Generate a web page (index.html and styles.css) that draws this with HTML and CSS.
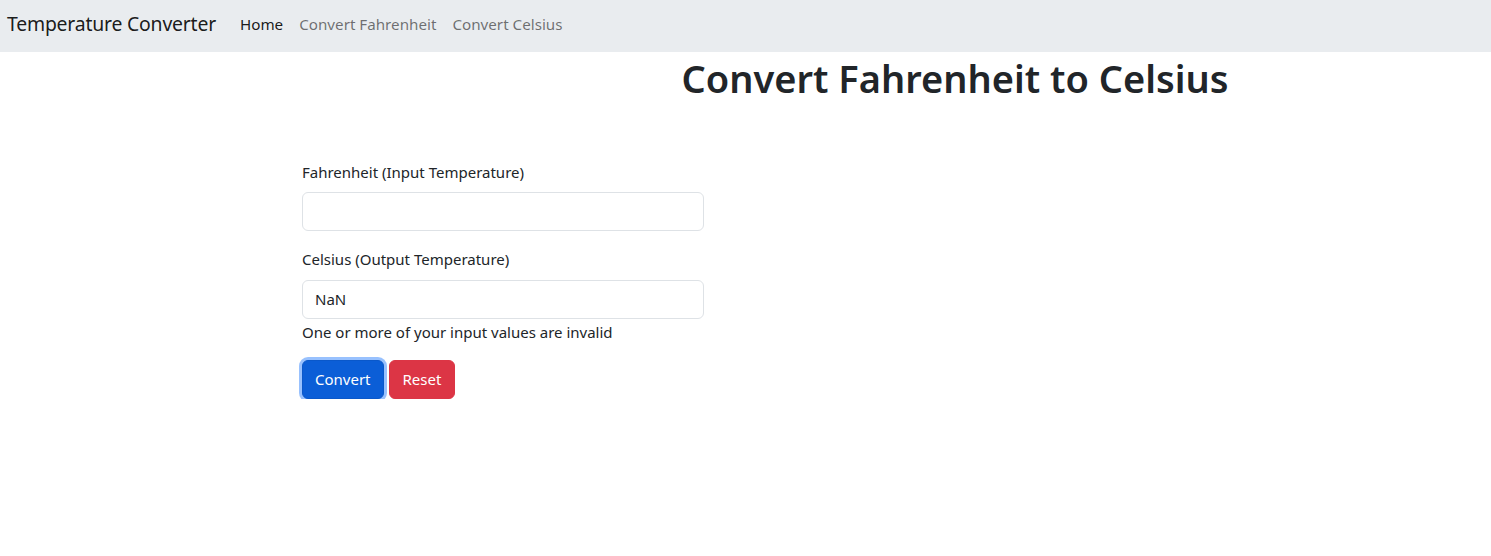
FILE: index.html
```html
<!DOCTYPE html>
<html lang="en">
<head>
<meta charset="utf-8">
<title>Temperature Converter</title>
<link rel="stylesheet" href="styles.css">
</head>
<body>
<nav class="navbar">
  <span class="brand">Temperature Converter</span>
  <ul class="nav">
    <li><a class="nav-link active" href="#">Home</a></li>
    <li><a class="nav-link" href="#">Convert Fahrenheit</a></li>
    <li><a class="nav-link" href="#">Convert Celsius</a></li>
  </ul>
</nav>
<main class="main">
  <h1 class="title">Convert Fahrenheit to Celsius</h1>
  <form class="form">
    <div class="field">
      <label class="label" for="f">Fahrenheit (Input Temperature)</label>
      <input class="input" id="f" type="text">
    </div>
    <div class="field">
      <label class="label" for="c">Celsius (Output Temperature)</label>
      <input class="input" id="c" type="text" value="NaN">
      <div class="message">One or more of your input values are invalid</div>
    </div>
    <div class="buttons">
      <button type="button" class="btn btn-primary">Convert</button>
      <button type="button" class="btn btn-danger">Reset</button>
    </div>
  </form>
</main>
</body>
</html>
```
FILE: styles.css
```css
* { box-sizing: border-box; }
body {
  margin: 0;
  font-family: "Noto Sans", "Open Sans", sans-serif;
  font-size: 16px;
  line-height: 1.5;
  color: #212529;
  background: #fff;
}
.navbar {
  height: 52px;
  background: #e9ecef;
  display: flex;
  align-items: center;
  padding: 0 7px 4px;
}
.brand {
  font-size: 19.4px;
  color: rgba(0,0,0,.9);
  margin-right: 16px;
  letter-spacing: -0.2px;
}
.nav {
  list-style: none;
  margin: 0;
  padding: 0;
  display: flex;
}
.nav-link {
  display: block;
  padding: 8px 8px;
  font-size: 15.2px;
  color: rgba(0,0,0,.55);
  text-decoration: none;
}
.nav-link.active { color: rgba(0,0,0,.9); }
.main {
  padding-top: 4px;
}
.title {
  margin: 0 0 0 419px;
  text-align: center;
  font-size: 38px;
  font-weight: 600;
  line-height: 1.2;
}
.form {
  width: 402px;
  margin: 59px 0 0 302px;
}
.field { margin-bottom: 17px; }
.label {
  display: block;
  margin-bottom: 9px;
  font-size: 15px;
}
.input {
  display: block;
  width: 100%;
  height: 39px;
  padding: 6px 12px;
  font: inherit;
  font-size: 15px;
  color: #212529;
  border: 1px solid #dee2e6;
  border-radius: 6px;
  background: #fff;
}
.message {
  font-size: 15px;
  line-height: 24px;
  margin-top: 1px;
  margin-bottom: -1px;
}
.buttons {
  display: flex;
  gap: 5px;
}
.btn {
  height: 39px;
  padding: 0 12px;
  font: inherit;
  font-size: 15px;
  color: #fff;
  border: 1px solid transparent;
  border-radius: 6px;
}
.btn-primary {
  background: #0b5ed7;
  border-color: #0a58ca;
  box-shadow: 0 0 0 3px rgba(49,132,253,.5);
}
.btn-danger {
  background: #dc3545;
  border-color: #dc3545;
  padding: 0 13px;
}
```
